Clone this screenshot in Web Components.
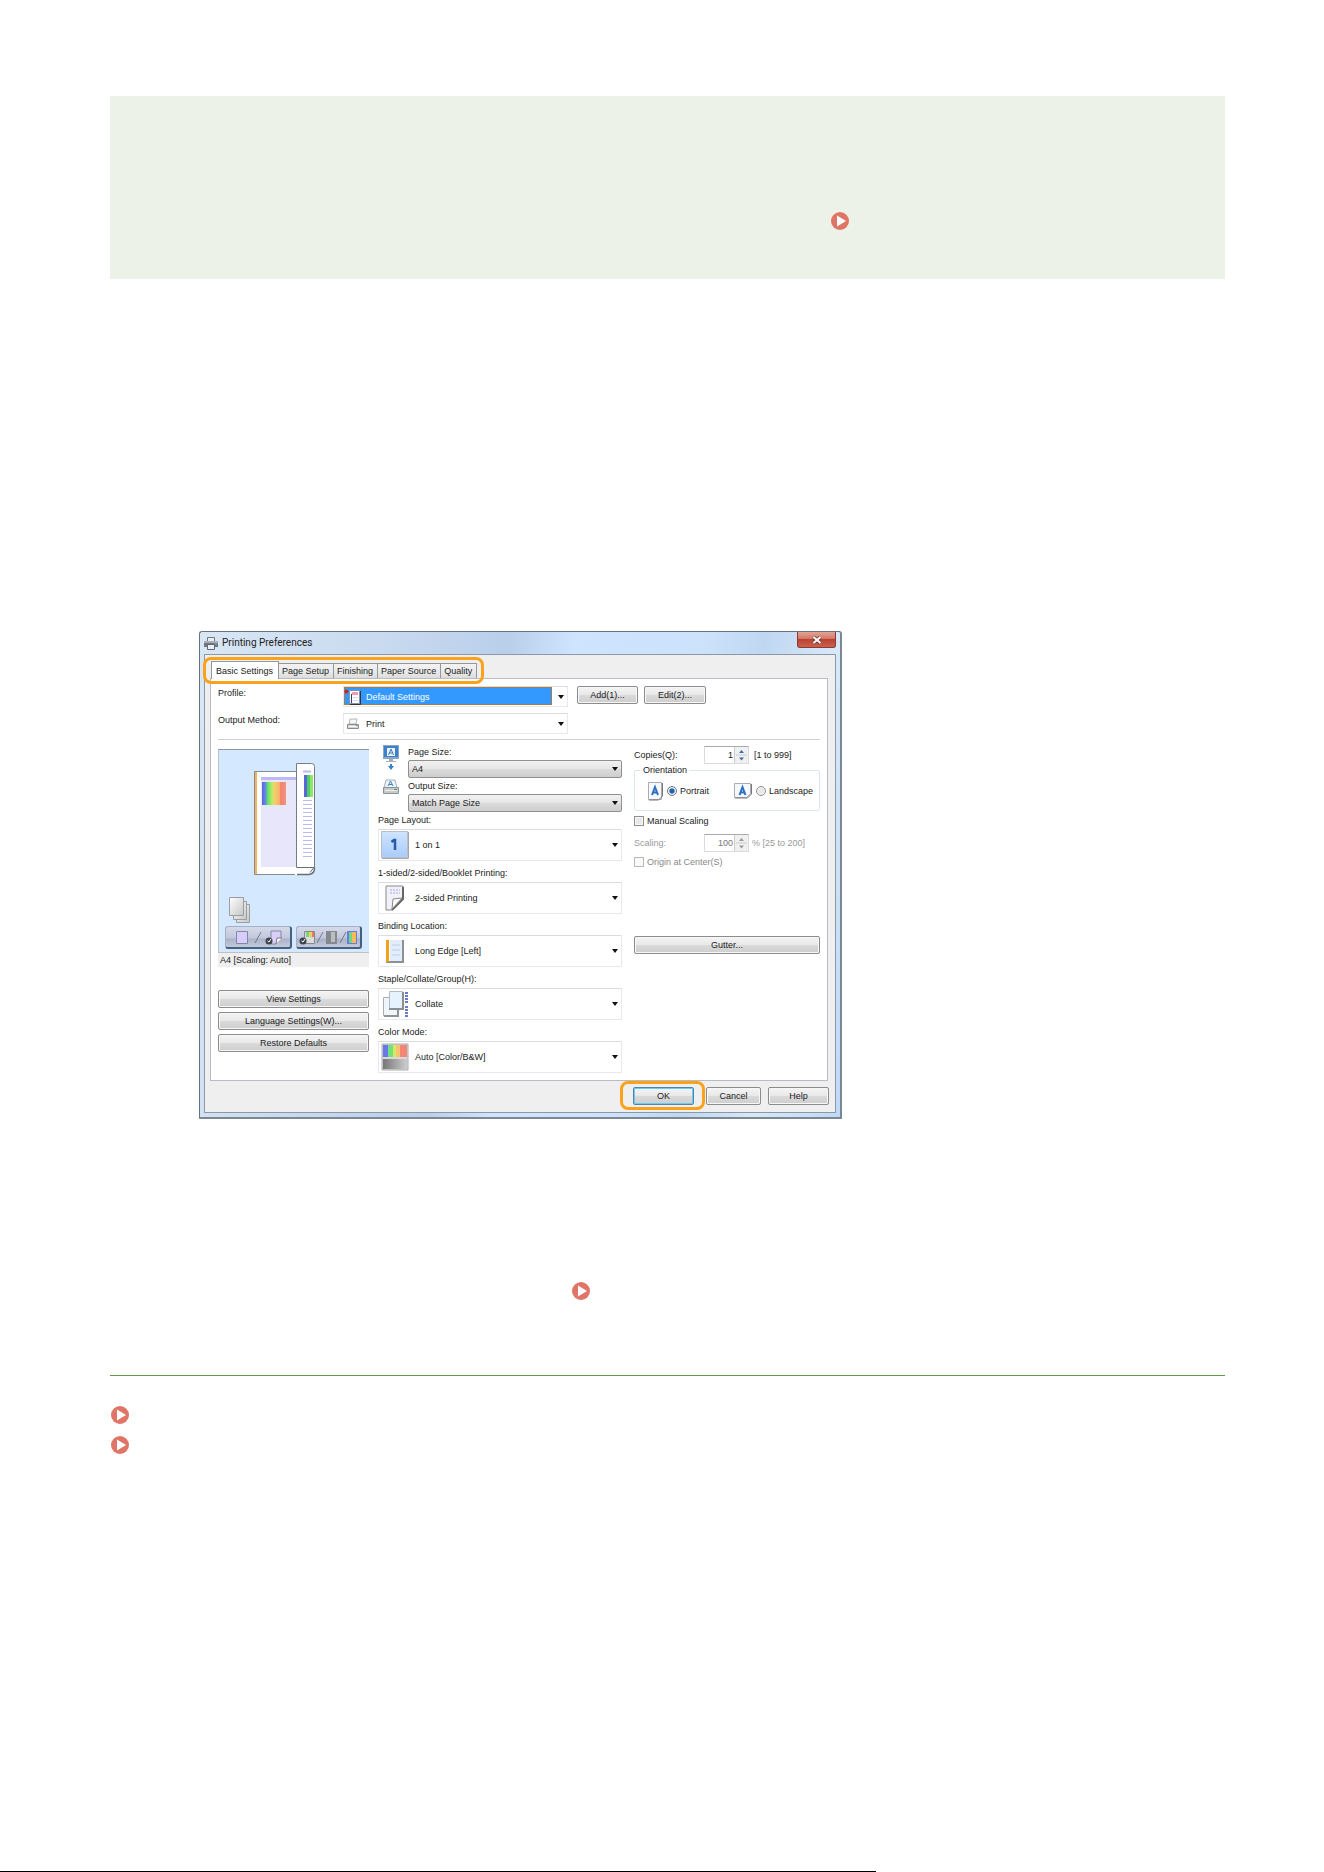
<!DOCTYPE html>
<html lang="en">
<head>
<meta charset="utf-8">
<title>Printing Preferences</title>
<style>
body { margin: 0; background: #fff; font-family: "Liberation Sans", Arial, sans-serif; }
</style>
</head>
<body>
<manual-page>
  <note-box><link-mark></link-mark></note-box>
  <print-dialog></print-dialog>
  <link-mark class="inline"></link-mark>
  <link-mark slot="links"></link-mark>
  <link-mark slot="links"></link-mark>
</manual-page>
<script>
function define(name, render) {
  customElements.define(name, class extends HTMLElement {
    constructor() {
      super();
      this.attachShadow({ mode: "open" });
    }
    connectedCallback() {
      const t = document.createElement("template");
      t.innerHTML = "<style>:host,*{box-sizing:border-box}svg{display:block}</style>" + render(this);
      this.shadowRoot.replaceChildren(t.content.cloneNode(true));
    }
  });
}
const attr = (el, n, d = "") => el.getAttribute(n) ?? d;

/* Small pictures used beside the settings */
const icons = {
  printer: `<svg width="14" height="14" viewBox="0 0 14 14"><path d="M3.500 1.500h7v4h-7z" fill="#e9eef4" stroke="#777"/><path d="M0 5h14v6H0z" fill="#6f7780"/><path d="M0 5h14v2H0z" fill="#a9b0b8"/><path d="M3.500 8.500h7v5h-7z" fill="#e8f1fb" stroke="#667"/><path d="M11 8h2" stroke="#5c8"/></svg>`,
  profile: `<svg width="18" height="16" viewBox="0 0 18 16"><path d="M5.500 1.500h10v13h-10z" fill="#fff" stroke="#8a90b0"/><path d="M16.500 2v13.500H6" fill="none" stroke="#333" /><path d="M8 3h6v3H8z" fill="#f39ab5"/><path d="M7.500 5v9" stroke="#345"/><path d="M9 8.500h5M9 11.500h5" stroke="#d8d8ee"/><circle cx="2.500" cy="2.500" r="2" fill="#c02a20"/></svg>`,
  print: `<svg width="14" height="14" viewBox="0 0 14 14"><path d="M4 2h7l-1 5H3z" fill="#f6f6f6" stroke="#b5b5b5"/><path d="M1.500 7.500h11v4h-11z" fill="#d4d6d9" stroke="#8c8c8c"/><path d="M3 9.500h8" stroke="#f7f7f7"/><path d="M10 8.500h1.500" stroke="#49a76a"/></svg>`,
  monitor: `<svg width="18" height="28" viewBox="0 0 18 28"><path d="M1 1h16v14H1z" fill="#8aa8c6"/><path d="M2 2h14v11H2z" fill="#3c80ca"/><path d="M5 4h8v8H5z" fill="#eaf4ff"/><path d="m6.500 11 2.500-6 2.500 6M7.500 9h3" fill="none" stroke="#3579bb"/><path d="M7 15h4v2h3v1H4v-1h3z" fill="#a9adb1"/><path d="M8 20h2v2h2l-3 4-3-4h2z" fill="#3b7ed0"/></svg>`,
  output: `<svg width="18" height="18" viewBox="0 0 18 18"><path d="M4 2h9l2 8H2z" fill="#eef5fc" stroke="#a6aeb6"/><path d="m6 8 2.500-5L11 8M7 6.500h3" fill="none" stroke="#3c80ca"/><path d="M1.500 9.500h15v6h-15z" fill="#c6cacd" stroke="#8d9296"/><path d="M3 12.500h12" stroke="#eee"/><path d="M12 11.500h3" stroke="#3f9b69"/></svg>`,
  one: `<svg width="28" height="28" viewBox="0 0 28 28"><defs><linearGradient id="b" x2="0" y2="1"><stop stop-color="#cfe4ff"/><stop offset="1" stop-color="#a9ccfc"/></linearGradient></defs><path d="M.500.500h26v26H.500z" fill="url(#b)" stroke="#b8bfc8"/><path d="M1 27.500h26.500V1" fill="none" stroke="#a6a6aa"/><path d="M10.500 11 13 9h1v10" fill="none" stroke="#245aa8" stroke-width="2.500"/></svg>`,
  duplex: `<svg width="28" height="28" viewBox="0 0 28 28"><path d="M5 2h17v13L11 26H5z" fill="#f1f1fa" stroke="#888"/><path d="M22 3v12L11 26" fill="none" stroke="#666" stroke-width="2"/><path d="m11 25 1-10 9-1z" fill="#fff" stroke="#888"/><path d="M9 6h10M9 9h10" stroke="#aaa3ee" stroke-dasharray="2 1"/></svg>`,
  binding: `<svg width="28" height="28" viewBox="0 0 28 28"><path d="M5 3h18v23H5z" fill="#8d9095"/><path d="M5 3h16v21H5z" fill="#e2edf9"/><path d="M5 3h3v22H5z" fill="#f5a11b"/><path d="M8.500 3v21" stroke="#fff"/><path d="M11 8h8M11 13h8M11 18h8" stroke="#b8cdec"/></svg>`,
  collate: `<svg width="28" height="28" viewBox="0 0 28 28"><path d="M2.500 7.500h14v18h-14z" fill="#eef5fb" stroke="#a6adb5"/><path d="M3 26h14V12" fill="none" stroke="#8f9499" stroke-width="2"/><path d="M8.500 1.500h13v17h-13z" fill="#e6f2fd" stroke="#b3bbc3"/><path d="M8 19h14V2" fill="none" stroke="#8a8f94" stroke-width="2"/><path d="M25.500 2v12M25.500 16v12" stroke="#6a7cc8" stroke-width="3" stroke-dasharray="2 1"/></svg>`,
  color: `<svg width="28" height="28" viewBox="0 0 28 28"><defs><linearGradient id="g"><stop stop-color="#777"/><stop offset="1" stop-color="#ccc"/></linearGradient></defs><path d="M1 1h26v26H1z" fill="#d9d9dc" stroke="#aaa"/><path d="M2 2h6v12H2z" fill="#6878e8"/><path d="M7 2h6v12H7z" fill="#6fe27b"/><path d="M12 2h7v12h-7z" fill="#d9e66a"/><path d="M18 2h8v12h-8z" fill="#f48774"/><path d="M15 2h4v12h-4z" fill="#f6c470"/><path d="M2 16h24v10H2z" fill="url(#g)"/></svg>`,
  portrait: `<svg width="16" height="19" viewBox="0 0 16 19"><path d="M.500.500h13v17h-13z" fill="#f5f8fc" stroke="#a9adb3"/><path d="M14.500 1v13l-4 4H1" fill="none" stroke="#777"/><path d="m4 13 3-8 3 8M5 10.500h4" fill="none" stroke="#2e6fc4" stroke-width="2"/></svg>`,
  landscape: `<svg width="19" height="16" viewBox="0 0 19 16"><path d="M.500.500h16v10l-4 4h-12z" fill="#f5f8fc" stroke="#a9adb3"/><path d="M17.500 1v10l-4 4H1" fill="none" stroke="#777"/><path d="m5.500 12 3-8 3 8M6.500 9.500h4" fill="none" stroke="#2e6fc4" stroke-width="2"/></svg>`
};

define("link-mark", () => `
<style>:host{display:block;width:18px;height:18px}a{display:block}</style>
<a href="#"><svg width="18" height="18" viewBox="0 0 18 18"><circle cx="9" cy="9" r="9" fill="#e07567"/><path d="M6 3.500v11L15 9z" fill="#fff"/></svg></a>`);

define("note-box", () => `
<style>:host{display:block;background:#ecf2e7;padding:116px 0 49px 721px}</style><slot></slot>`);

define("manual-page", () => `
<style>
:host{display:flex;flex-direction:column;min-height:100vh}
main{padding:96px 99px 40px 110px}
::slotted(print-dialog){margin:352px 0 0 89px}
::slotted(.inline){margin:163px 0 0 462px}
hr{border:0;height:1px;background:#62994a;margin:75px 0 0}
nav{display:flex;flex-direction:column;gap:12px;padding:30px 0 0 1px}
footer{margin-top:auto;height:1px;width:66.2%;background:#000}
</style>
<main><slot></slot><hr><nav><slot name="links"></slot></nav></main><footer></footer>`);

define("pref-button", () => `
<style>
:host{display:block}
button{display:block;width:100%;height:18px;padding:0;margin:0;font:inherit;color:#222;line-height:14px;border:1px solid #8c8c8c;border-radius:2px;background:linear-gradient(#f4f4f4,#e9e9e9 48%,#dadada 52%,#cecece);box-shadow:inset 0 0 0 1px #f7f7f7}
:host([primary]) button{border-color:#4a87aa;box-shadow:inset 0 0 0 1px #6dcbf0}
</style><button type="button"><slot></slot></button>`);

define("pref-select", el => {
  const icon = attr(el, "icon");
  return `
<style>
:host{display:block;min-width:0}
label{display:block;line-height:17px;white-space:nowrap}
:host([kind=small]) label{line-height:16px}
.box{display:grid;align-items:center}
.box>*{grid-area:1/1}
select{appearance:none;width:100%;height:32px;margin:0;padding:0 20px 0 36px;font:inherit;color:#222;background:#fff;border:1px solid #e6eaf0;border-top-color:#dcdcdf;border-radius:0}
:host([kind=small]) select{height:18px;padding-left:3px;border:1px solid #8f8f8f;border-radius:2px;background:linear-gradient(#f1f1f1,#e6e6e6 48%,#dadada 52%,#cecece)}
:host([kind=row]) select{height:21px;padding-left:22px}
.icon{pointer-events:none;padding-left:3px}
:host([selected]) .icon{padding-left:1px}
.arrow{pointer-events:none;justify-self:end;margin-right:4px}
:host([selected]) select{color:#fff;background:linear-gradient(#39f,#39f) 1px 1px/206px 16px no-repeat,linear-gradient(#a57c4b,#a57c4b) 0 0/208px 18px no-repeat,#fff}
</style>
${el.hasAttribute("label") ? `<label for="s">${attr(el, "label")}</label>` : ""}
<div class="box"><select id="s"${el.hasAttribute("name") ? ` aria-label="${attr(el, "name")}"` : ""}><option>${attr(el, "value").replace("&", "&amp;")}</option></select>
${icon ? `<span class="icon">${icons[icon]}</span>` : ""}
<svg class="arrow" width="6" height="4" viewBox="0 0 6 4"><path d="M0 0h6L3 4z" fill="#111"/></svg></div>`;
});

define("pref-spin", el => {
  const dis = el.hasAttribute("disabled");
  const c = dis ? "#999" : "#3f6fae";
  return `
<style>
:host{display:flex;align-items:center;height:18px;white-space:nowrap}
label{width:70px}
.field{display:flex;width:45px;height:18px;border:1px solid #d8dbe0;border-top-color:#aaa}
input{width:29px;min-width:0;border:0;padding:0 1px 0 0;margin:0;background:#fff;font:inherit;color:#222;text-align:right}
.steps{flex:1;background:#f0f0f0;border-left:1px solid #ccc}
output{margin-left:5px}
:host([disabled]){color:#999}
:host([disabled]) input{color:#777}
:host([disabled]) output{margin-left:3px}
</style>
<label for="n">${attr(el, "label")}</label>
<div class="field"><input id="n" type="text" value="${attr(el, "value")}"${dis ? " disabled" : ""}>
<svg class="steps" width="13" height="16" viewBox="0 0 13 16"><path d="M1 8h11" stroke="#ccc"/><path d="m4 6 2.500-3L9 6zM4 10.500l2.500 3 2.500-3z" fill="${c}"/></svg></div>
<output for="n">${attr(el, "range")}</output>`;
});

define("pref-toggle", el => `
<style>
:host{display:flex;align-items:center}
label{display:flex;align-items:center;gap:3px;line-height:14px;white-space:nowrap}
input{appearance:none;width:10px;height:10px;margin:0;border:1px solid #8c8f94;background:#e6e8ea;box-shadow:inset 0 0 0 1px #f7f7f7;flex:none}
input[type=radio]{border-radius:50%}
input[type=radio]:checked{border-color:#6a7683;background:radial-gradient(circle,#1c66a8 0 2px,#9fc3df 3px,#dfe5ea 4px)}
:host([disabled]){color:#888}
:host([disabled]) input{border-color:#bbb;background:#fafafa}
</style>
<label><input type="${attr(el, "type")}" ${el.hasAttribute("checked") ? "checked" : ""} ${el.hasAttribute("disabled") ? "disabled" : ""}><span><slot></slot></span></label>`);

define("pref-tabs", el => `
<style>
:host{display:flex;width:fit-content;position:relative;z-index:1;height:17px;margin-left:1px;align-items:flex-end}
:host::after{content:"";position:absolute;inset:-4px -7px -6px -8px;border:3px solid #faa21b;border-radius:8px;pointer-events:none}
button{height:15px;margin:0;padding:0 4px 0 3px;font:inherit;color:#222;white-space:nowrap;border:1px solid #94979c;border-width:1px 1px 0 0;background:linear-gradient(#f3f3f3,#ebebeb 50%,#dcdcdc)}
button[aria-selected=true]{height:18px;margin-bottom:-1px;padding:0 5px 0 4px;background:#fff;border-left-width:1px}
</style>
${attr(el, "tabs").split("|").map((t, i) => `<button type="button" role="tab" aria-selected="${i === 0}">${t}</button>`).join("")}`);

define("print-preview", () => `
<style>
:host{display:block}
.view{background:#d4e9ff;border-top:1px solid #8f979f;border-left:1px solid #b5c2cf;height:203px}
.tools{display:flex;gap:4px;padding:0 7px 0 6px}
button{flex:1 1 0;min-width:0;height:23px;padding:0;margin:0;display:flex;align-items:center;justify-content:center;border:1px solid #a5afc6;border-right:2px solid #42607f;border-bottom:2px solid #42607f;border-radius:3px;background:linear-gradient(#d5daea,#c2c8dc 55%,#abb1c6 60%,#c4cade)}
p{margin:0;line-height:15px;height:15px;background:#efefef;border-top:1px solid #c0c0c0;padding-left:2px;color:#222}
</style>
<div class="view">
<svg width="149" height="176" viewBox="1 1 149 176">
<defs><linearGradient id="r"><stop stop-color="#5966dc"/><stop offset=".16" stop-color="#6a8ae8"/><stop offset=".22" stop-color="#58dc67"/><stop offset=".42" stop-color="#b7ee69"/><stop offset=".5" stop-color="#f2d06c"/><stop offset=".72" stop-color="#f7b669"/><stop offset=".78" stop-color="#f2816d"/><stop offset="1" stop-color="#f39382"/></linearGradient>
<linearGradient id="p" x2="1" y2="1"><stop stop-color="#fff"/><stop offset="1" stop-color="#c6c6c6"/></linearGradient></defs>
<path d="M36.500 22.500h45v103h-45z" fill="#fff" stroke="#858b93"/>
<path d="M37 23h2v102h-2z" fill="#f5b459"/>
<path d="M43 28h36v90H43z" fill="#e8e6fb"/><path d="M43 28h36v3H43z" fill="#bdb9f5"/>
<path d="M44 33h24v23H44z" fill="url(#r)"/>
<path d="M77 119h19v3q0 4-5 4H77z" fill="#fff"/>
<path d="M79 125.500h12q6-1 5.500-7" fill="none" stroke="#666e78" stroke-width="1.500"/>
<path d="M78.500 14.500h15q3 0 3 3v101h-18z" fill="#fff" stroke="#747c86"/>
<path d="M79 118.500h17l-4 5" fill="none" stroke="#666e78"/>
<path d="M85 22.500h8" stroke="#bdb9f5" stroke-width="2"/>
<path d="M86 26h3v22h-3z" fill="#5966dc"/><path d="M89 26h3v22h-3z" fill="#50cf60"/><path d="M92 26h3v22h-3z" fill="#8ee76c"/>
<path d="M85 51.500h9M85 55.500h9M85 59.500h9M85 63.500h9M85 67.500h9M85 71.500h9M85 75.500h9M85 79.500h9M85 83.500h9M85 87.500h9M85 91.500h9M85 95.500h9M85 99.500h9M85 103.500h9M85 107.500h9" stroke="#bdb9f5"/>
<g fill="url(#p)" stroke="#9a9da2"><path d="M18.500 155.500h13v18h-13z"/><path d="M15.500 152.500h13v18h-13z"/><path d="M11.500 148.500h14v18h-14z"/></g>
</svg>
<div class="tools">
<button type="button" aria-label="Sides"><svg width="52" height="19" viewBox="0 0 52 19"><path d="M4.500 3.500h11v12h-11z" fill="#d7ccfb" stroke="#8389a2"/><path d="m23 15 6-11" stroke="#777b87"/><path d="M39 3h10v8l-5 5h-5z" fill="#d8cef8" stroke="#8389a2"/><path d="m44 16 1-6h5" fill="#fff" stroke="#777"/><circle cx="37" cy="13" r="3.500" fill="#3f444c"/><path d="m35.500 13 1.500 1 2-3" fill="none" stroke="#fff"/></svg></button>
<button type="button" aria-label="Color"><svg width="60" height="19" viewBox="0 0 60 19"><path d="M6.500 3.500h10v12h-10z" fill="#d8dbe0" stroke="#888"/><path d="M8 4h3v5H8z" fill="#77d680"/><path d="M11 4h3v5h-3z" fill="#f4cf57"/><path d="M14 4h2v5h-2z" fill="#e97a65"/><circle cx="5" cy="13" r="3.500" fill="#3f444c"/><path d="m3.500 13 1.500 1 2-3" fill="none" stroke="#fff"/><path d="m19 15 6-11M42 15l6-11" stroke="#777b87"/><path d="M28 3h11v13H28z" fill="#85898e"/><path d="M33 4h4v10h-4z" fill="#bcbdc0"/><path d="M49 3h10v13H49z" fill="#687ce2"/><path d="M51 4h3v11h-3z" fill="#70d780"/><path d="M54 4h4v11h-4z" fill="#f4bd57"/></svg></button>
</div></div>
<p>A4 [Scaling: Auto]</p>`);

define("print-dialog", () => `
<style>
:host{display:block;width:643px;border:1px solid #66727f;border-radius:3px 3px 1px 1px;border-right:2px solid #7c8792;border-bottom:2px solid #7c8792;padding:0 4px 4px;background:linear-gradient(100deg,#d9e7f5 0,#cbdcf0 22%,#b9cfea 43%,#cfe5ff 52%,#cce2fb 70%,#bfd7f1 78%,#d8e8f8 88%,#bddaf8);font-size:9px;line-height:14px;color:#222}
header{display:flex;align-items:center;height:22px;gap:4px}
header span{flex:1}
h1{margin:0;font:10px/20px Roboto,sans-serif}
.close{width:39px;height:16px;margin:0;padding:0;align-self:flex-start;border:1px solid #8b3932;border-top:0;border-radius:0 0 3px 3px;background:linear-gradient(#e2a397,#d37766 45%,#bd4030 50%,#ca6150);display:grid;place-items:center}
.client{background:#efefef;border:1px solid #8c98a5;padding:6px 7px 7px 5px}
.panel{background:#fff;border:1px solid #b9bcc2;padding:7px}
.rows{display:grid;grid-template-columns:125px 225px 62px 62px;row-gap:6px;padding-bottom:5px;border-bottom:1px solid #cfcfcf}
.rows pref-button:nth-of-type(1){margin-left:9px;margin-right:-8px}
.rows pref-button:nth-of-type(2){margin-left:14px;margin-right:-14px}
.cols{display:grid;grid-template-columns:151px 1fr 186px;padding-top:4px}
.left{padding-top:5px}
.stack{display:flex;flex-direction:column;gap:4px;margin-top:23px}
.mid{padding:0 12px 0 9px}
.size{display:grid;grid-template-columns:30px 1fr;justify-items:start}
.size pref-select{width:100%}
.size svg{margin-left:4px}
.list{display:grid;gap:4px}
.right{padding-top:2px}
fieldset{border:1px solid #dde6ef;border-radius:2px;margin:0;padding:5px 6px 8px 13px;height:47px;min-width:0}
legend{line-height:12px;padding:0 2px;margin-left:-7px}
.orient{display:flex;align-items:center;justify-content:space-between;height:20px}
.orient div{display:flex;align-items:center;gap:3px}
.c1{margin-top:3px}.c2{margin-top:6px}.c3{margin-top:3px}.gut{margin-top:67px}
footer{display:flex;justify-content:flex-end;gap:7px;padding-top:6px;margin-right:-1px}
.ok{width:61px;position:relative;margin-right:5px}
.ok::after{content:"";position:absolute;inset:-6px -11px -5px -13px;border:3px solid #faa21b;border-radius:8px;pointer-events:none}
.cancel{width:55px}.help{width:61px}
</style>
<header>${icons.printer}<h1>Printing Preferences</h1><span></span>
<button class="close" type="button" aria-label="Close"><svg width="10" height="8" viewBox="0 0 10 8"><path d="m1.500 1 7 6m0-6-7 6" stroke="#6b3a35" stroke-width="3.500"/><path d="m1.500 1 7 6m0-6-7 6" stroke="#fff" stroke-width="2"/></svg></button></header>
<div class="client">
<pref-tabs tabs="Basic Settings|Page Setup|Finishing|Paper Source|Quality"></pref-tabs>
<div class="panel">
<div class="rows">
<span>Profile:</span><pref-select kind="row" name="Profile" icon="profile" value="Default Settings" selected></pref-select><pref-button>Add(1)...</pref-button><pref-button>Edit(2)...</pref-button>
<span>Output Method:</span><pref-select kind="row" name="Output Method" icon="print" value="Print"></pref-select>
</div>
<div class="cols">
<div class="left"><print-preview></print-preview>
<div class="stack"><pref-button>View Settings</pref-button><pref-button>Language Settings(W)...</pref-button><pref-button>Restore Defaults</pref-button></div></div>
<div class="mid">
<div class="size">${icons.monitor}<pref-select kind="small" label="Page Size:" value="A4"></pref-select>${icons.output}<pref-select kind="small" label="Output Size:" value="Match Page Size"></pref-select></div>
<div class="list">
<pref-select label="Page Layout:" icon="one" value="1 on 1"></pref-select>
<pref-select label="1-sided/2-sided/Booklet Printing:" icon="duplex" value="2-sided Printing"></pref-select>
<pref-select label="Binding Location:" icon="binding" value="Long Edge [Left]"></pref-select>
<pref-select label="Staple/Collate/Group(H):" icon="collate" value="Collate"></pref-select>
<pref-select label="Color Mode:" icon="color" value="Auto [Color/B&amp;W]"></pref-select>
</div></div>
<div class="right">
<pref-spin label="Copies(Q):" value="1" range="[1 to 999]"></pref-spin>
<fieldset><legend>Orientation</legend><div class="orient"><div>${icons.portrait}<pref-toggle type="radio" checked>Portrait</pref-toggle></div><div>${icons.landscape}<pref-toggle type="radio">Landscape</pref-toggle></div></div></fieldset>
<pref-toggle class="c1" type="checkbox">Manual Scaling</pref-toggle>
<pref-spin class="c2" label="Scaling:" value="100" range="% [25 to 200]" disabled></pref-spin>
<pref-toggle class="c3" type="checkbox" disabled>Origin at Center(S)</pref-toggle>
<pref-button class="gut">Gutter...</pref-button>
</div></div></div>
<footer><pref-button class="ok" primary>OK</pref-button><pref-button class="cancel">Cancel</pref-button><pref-button class="help">Help</pref-button></footer>
</div>`);
</script>
</body>
</html>
